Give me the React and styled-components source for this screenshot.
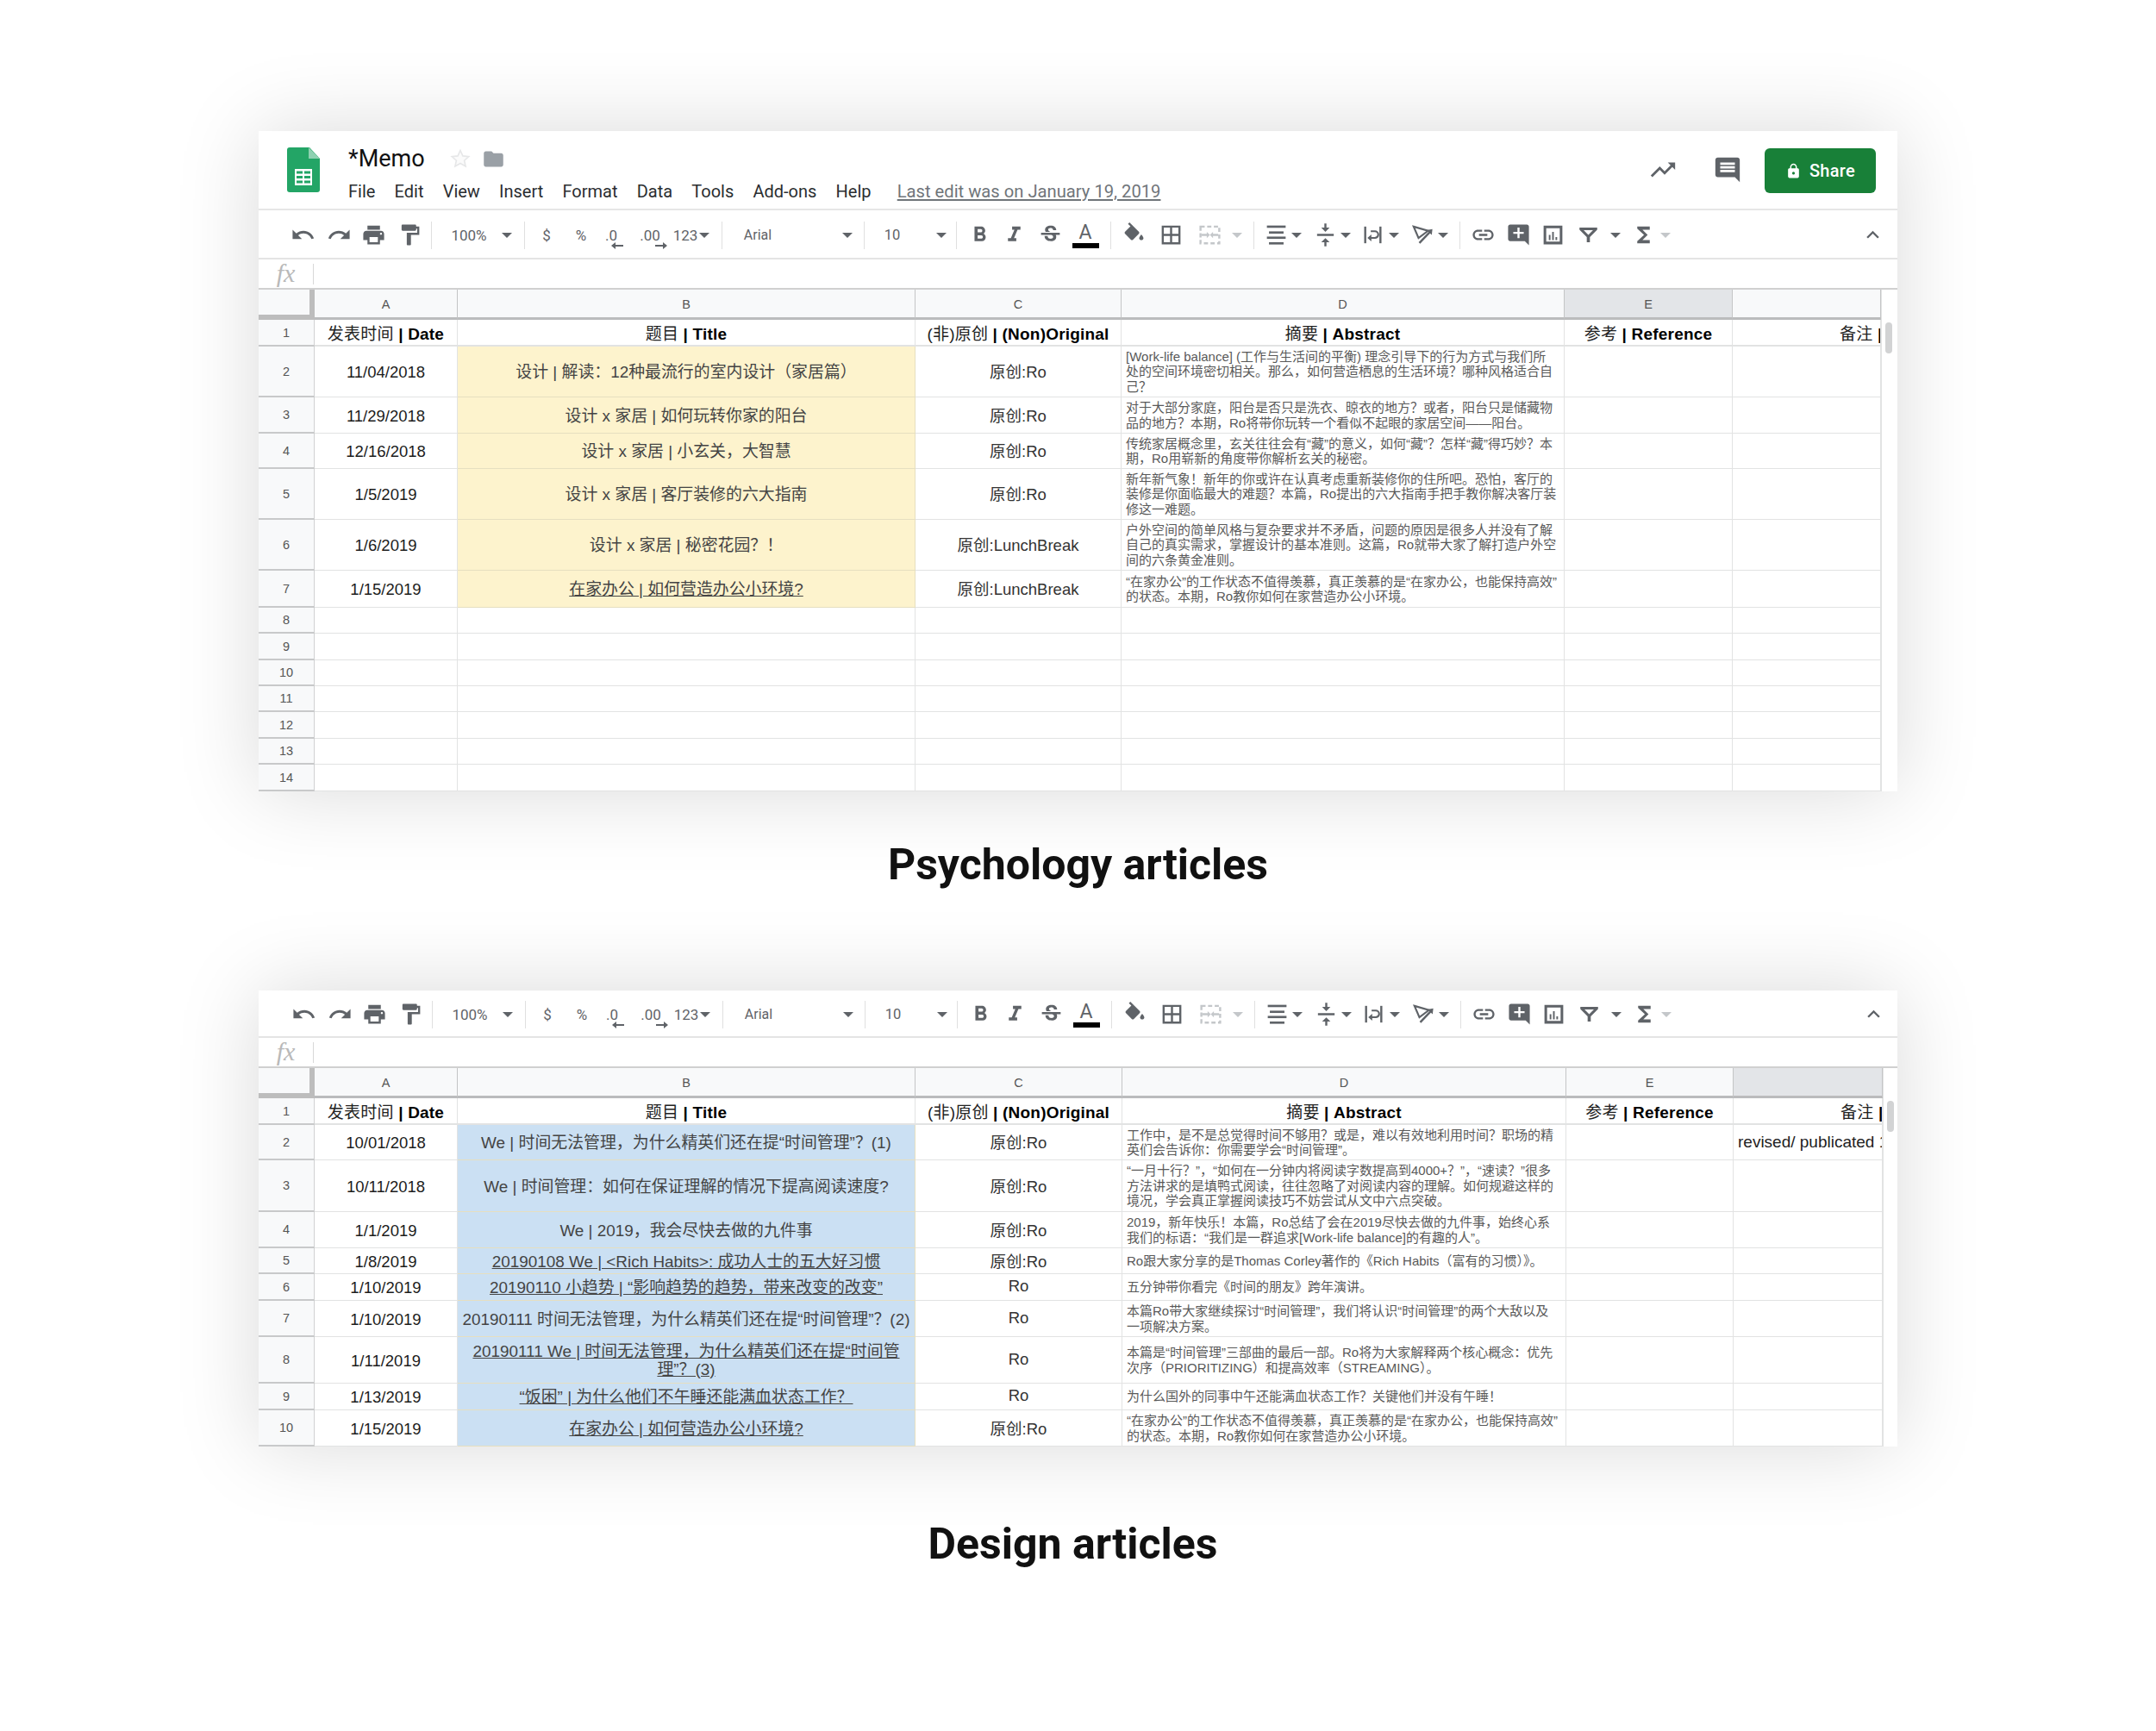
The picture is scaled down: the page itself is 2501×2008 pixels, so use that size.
import React from "react";
import styled, { createGlobalStyle, css } from "styled-components";

const Global = createGlobalStyle`
  html, body { margin: 0; padding: 0; background: #fff; }
  body { font-family: "Liberation Sans", "Noto Sans CJK SC", sans-serif; }
`;

const cellFont = `"Liberation Sans", "Noto Sans CJK SC", sans-serif`;
const uiFont = `Roboto, "Liberation Sans", sans-serif`;

const Page = styled.div`
  width: 2501px;
  height: 2008px;
  box-sizing: border-box;
  padding: 152px 300px 0;
  overflow: hidden;
`;
const Card = styled.section`
  width: 1901px;
  background: #fff;
  box-shadow: 0 0 90px rgba(0, 0, 0, 0.15);
  overflow: hidden;
`;
const Caption = styled.h2`
  margin: 0 0 ${(p) => p.$mb}px;
  height: ${(p) => p.$h}px;
  padding-right: ${(p) => p.$shift}px;
  display: flex;
  align-items: center;
  justify-content: center;
  font: 700 50px/1 ${uiFont};
  color: #111;
`;

/* ---------- title bar ---------- */
const TitleBar = styled.header`
  height: 92px;
  box-sizing: border-box;
  display: flex;
  align-items: center;
  padding: 0 25px 0 33px;
  border-bottom: 2px solid #e6e6e6;
`;
const DocInfo = styled.div`
  margin-left: 33px;
  display: flex;
  flex-direction: column;
  gap: 9px;
  flex: 1;
  padding-top: 9px;
`;
const NameRow = styled.div`
  display: flex;
  align-items: center;
  height: 32px;
`;
const DocName = styled.span`
  font: 400 27px/32px ${uiFont};
  color: #111;
  width: 118px;
`;
const MenuRow = styled.nav`
  display: flex;
  align-items: center;
  gap: 22.2px;
  font: 400 20px/26px ${uiFont};
  color: #2b2e31;
`;
const LastEdit = styled.a`
  margin-left: 8px;
  color: #70757a;
  text-decoration: underline;
  font-size: 20.2px;
`;
const FolderMark = styled.svg`
  margin-left: 13px;
  fill: #9aa0a6;
`;
const HeadAction = styled.span`
  display: flex;
  margin-right: ${(p) => p.$mr}px;
  color: #5f6368;
`;
const ShareButton = styled.button`
  width: 129px;
  height: 52px;
  margin-top: 2px;
  border: 0;
  border-radius: 6px;
  background: #188038;
  color: #fff;
  display: flex;
  align-items: center;
  justify-content: center;
  gap: 9px;
  font: 500 20px/1 ${uiFont};
  letter-spacing: 0.3px;
`;

/* ---------- toolbar ---------- */
const Toolbar = styled.div`
  height: ${(p) => p.$h}px;
  box-sizing: border-box;
  display: flex;
  align-items: center;
  padding: 2px 0 0 ${(p) => p.$shift}px;
  border-bottom: 2px solid #e4e4e4;
  color: #5f6368;
`;
const Slot = styled.span`
  flex: none;
  width: ${(p) => p.$w}px;
  margin-left: ${(p) => p.$ml}px;
  display: flex;
  flex-direction: column;
  align-items: center;
  justify-content: center;
  color: ${(p) => (p.$off ? "#c4c7ca" : "#5f6368")};
`;
const ToolText = styled.span`
  font: 400 ${(p) => p.$size || 17}px/20px ${uiFont};
  color: #5f6368;
  white-space: nowrap;
`;
const Sep = styled.span`
  flex: none;
  width: 1px;
  height: 32px;
  margin-left: ${(p) => p.$ml}px;
  background: #e0e0e0;
`;
const Arrow = styled.span`
  width: 0;
  height: 0;
  border-left: 6px solid transparent;
  border-right: 6px solid transparent;
  border-top: 6px solid ${(p) => (p.$off ? "#c4c7ca" : "#5f6368")};
`;
const ColorA = styled.span`
  font: 400 23px/21px ${uiFont};
  color: #5f6368;
  margin-top: 2px;
`;
const ColorBar = styled.span`
  width: 31px;
  height: 6px;
  background: #000;
  margin-top: 2px;
`;
const SmallArrow = styled.svg`
  width: 14px;
  height: 10px;
  margin: -3px 0 -7px ${(p) => p.$x}px;
`;

/* ---------- formula bar ---------- */
const FormulaBar = styled.div`
  height: 35px;
  box-sizing: border-box;
  display: flex;
  align-items: center;
  border-bottom: 2px solid #d0d0d0;
`;
const Fx = styled.span`
  width: 64px;
  height: 24px;
  box-sizing: border-box;
  text-align: center;
  font: italic 400 30px/22px "Liberation Serif", serif;
  color: #b9b9b9;
  border-right: 1px solid #d8d8d8;
`;

/* ---------- grid ---------- */
const Body = styled.div`
  display: flex;
`;
const Rows = styled.div`
  flex: none;
  width: ${(p) => p.$w}px;
  display: flex;
  flex-direction: column;
`;
const Track = styled.div`
  flex: 1;
  box-sizing: border-box;
  padding: 38px 0 0 4px;
  border-left: 1px solid #e2e3e3;
`;
const Thumb = styled.div`
  width: 8px;
  height: 36px;
  border-radius: 4px;
  background: #d2d3d4;
`;
const Row = styled.div`
  display: grid;
  grid-template-columns: ${(p) => p.$cols};
  height: ${(p) => p.$h}px;
`;
const cellBase = css`
  box-sizing: border-box;
  min-width: 0;
  overflow: hidden;
  display: flex;
  align-items: center;
  border-right: 1px solid #e2e3e3;
  border-bottom: 1px solid #e2e3e3;
  font-family: ${cellFont};
`;
const Corner = styled.div`
  ${cellBase};
  background: #f8f9fa;
  border-right: 6px solid #bdbdbd;
  border-bottom: 6px solid #bdbdbd;
`;
const ColHead = styled.div`
  ${cellBase};
  justify-content: center;
  background: ${(p) => (p.$active ? "#e3e5e8" : "#f8f9fa")};
  border-right: 1px solid #c4c5c6;
  border-bottom: 3px solid #bbbcbd;
  font-size: 14.5px;
  color: #555;
  padding-top: 2px;
`;
const RowHead = styled.div`
  ${cellBase};
  justify-content: center;
  background: #f8f9fa;
  border-right: 1px solid #d0d1d2;
  border-bottom: 2px solid #c8c9ca;
  font-size: 14.5px;
  color: #555;
`;
const HeadCell = styled.div`
  ${cellBase};
  justify-content: center;
  font-size: 19px;
  letter-spacing: 0.2px;
  color: #222;
  white-space: nowrap;
  border-bottom-width: 2px;
  b { color: #000; }
`;
const NotesHead = styled(HeadCell)`
  justify-content: flex-start;
  padding-left: 124px;
`;
const DateCell = styled.div`
  ${cellBase};
  justify-content: center;
  padding-top: 2px;
  font-size: 18.5px;
  color: #1c1c1c;
`;
const TitleCell = styled.div`
  ${cellBase};
  justify-content: center;
  text-align: center;
  white-space: pre-line;
  padding: 1px 2px 0;
  font-size: 18.9px;
  line-height: 21px;
  color: #444;
  background: ${(p) => p.$tint || "transparent"};
  border-color: ${(p) => (p.$tint ? "#e6dfc0" : "#e2e3e3")};
  text-decoration: ${(p) => (p.$link ? "underline" : "none")};
`;
const OriginCell = styled.div`
  ${cellBase};
  justify-content: center;
  padding-bottom: 2px;
  font-size: 18.5px;
  color: #333;
`;
const AbstractCell = styled.div`
  ${cellBase};
  padding-left: 5px;
  white-space: pre;
  font-size: 15px;
  line-height: 17.5px;
  color: #595959;
`;
const PlainCell = styled.div`
  ${cellBase};
  padding-left: 5px;
  font-size: 19px;
  color: #222;
  white-space: nowrap;
`;

/* ---------- icons ---------- */
const Icon = ({ d, size = 29, children }) => (
  <svg width={size} height={size} viewBox="0 0 24 24" fill="currentColor">
    {d && <path d={d} />}
    {children}
  </svg>
);
const P = {
  undo: "M12.5 8c-2.65 0-5.05.99-6.9 2.6L2 7v9h9l-3.62-3.62c1.39-1.16 3.16-1.88 5.12-1.88 3.54 0 6.55 2.31 7.6 5.5l2.37-.78C21.08 11.03 17.15 8 12.5 8z",
  redo: "M18.4 10.6C16.55 8.99 14.15 8 11.5 8c-4.65 0-8.58 3.03-9.96 7.22L3.9 16c1.05-3.19 4.05-5.5 7.6-5.5 1.95 0 3.73.72 5.12 1.88L13 16h9V7l-3.6 3.6z",
  print: "M19 8H5c-1.66 0-3 1.34-3 3v6h4v4h12v-4h4v-6c0-1.66-1.34-3-3-3zm-3 11H8v-5h8v5zm3-7c-.55 0-1-.45-1-1s.45-1 1-1 1 .45 1 1-.45 1-1 1zm-1-9H6v4h12V3z",
  paint: "M18 4V3c0-.55-.45-1-1-1H5c-.55 0-1 .45-1 1v4c0 .55.45 1 1 1h12c.55 0 1-.45 1-1V6h1v4H9v11c0 .55.45 1 1 1h2c.55 0 1-.45 1-1v-9h8V4h-3z",
  bold: "M15.6 10.79c.97-.67 1.65-1.77 1.65-2.79 0-2.26-1.75-4-4-4H7v14h7.04c2.09 0 3.71-1.7 3.71-3.79 0-1.52-.86-2.82-2.15-3.42zM10 6.5h3c.83 0 1.5.67 1.5 1.5s-.67 1.5-1.5 1.5h-3v-3zm3.5 9H10v-3h3.5c.83 0 1.5.67 1.5 1.5s-.67 1.5-1.5 1.5z",
  italic: "M10 4v3h2.21l-3.42 8H6v3h8v-3h-2.21l3.42-8H18V4z",
  strike: "M7.24 8.75c-.26-.48-.39-1.03-.39-1.67 0-.61.13-1.16.4-1.67.26-.5.63-.93 1.11-1.29.48-.35 1.05-.63 1.7-.83.66-.19 1.39-.29 2.18-.29.81 0 1.54.11 2.21.34.66.22 1.23.54 1.69.94.47.4.83.88 1.08 1.43.25.55.38 1.15.38 1.81h-3.01c0-.31-.05-.59-.15-.85-.09-.27-.24-.49-.44-.68-.2-.19-.45-.33-.75-.44-.3-.1-.66-.16-1.06-.16-.39 0-.74.04-1.03.13-.29.09-.53.21-.72.36-.19.16-.34.34-.44.55-.1.21-.15.43-.15.66 0 .48.25.88.74 1.21.38.25.77.48 1.41.7H7.39c-.05-.08-.11-.17-.15-.25zM21 12v-2H3v2h9.62c.18.07.4.14.55.2.37.17.66.34.87.51.21.17.35.36.43.57.07.2.11.43.11.69 0 .23-.05.45-.14.66-.09.2-.23.38-.42.53-.19.15-.42.26-.71.35-.29.08-.63.13-1.01.13-.43 0-.83-.04-1.18-.13s-.66-.23-.91-.42c-.25-.19-.45-.44-.59-.75-.14-.31-.25-.76-.25-1.21H6.4c0 .55.08 1.13.24 1.58.16.45.37.85.65 1.21.28.35.6.66.98.92.37.26.78.48 1.22.65.44.17.9.3 1.38.39.48.08.96.13 1.44.13.8 0 1.53-.09 2.18-.28s1.21-.45 1.67-.79c.46-.34.82-.77 1.07-1.27s.38-1.07.38-1.71c0-.6-.1-1.14-.31-1.61-.05-.11-.11-.23-.17-.33H21z",
  borders: "M3 3v18h18V3H3zm8 16H5v-6h6v6zm0-8H5V5h6v6zm8 8h-6v-6h6v6zm0-8h-6V5h6v6z",
  valign: "M8 19h3v4h2v-4h3l-4-4-4 4zm8-14h-3V1h-2v4H8l4 4 4-4zM4 11v2h16v-2H4z",
  link: "M3.9 12c0-1.71 1.39-3.1 3.1-3.1h4V7H7c-2.76 0-5 2.24-5 5s2.24 5 5 5h4v-1.9H7c-1.71 0-3.1-1.39-3.1-3.1zM8 13h8v-2H8v2zm9-6h-4v1.9h4c1.71 0 3.1 1.39 3.1 3.1s-1.39 3.1-3.1 3.1h-4V17h4c2.76 0 5-2.24 5-5s-2.24-5-5-5z",
  addComment: "M21.99 4c0-1.1-.89-2-1.99-2H4c-1.1 0-2 .9-2 2v12c0 1.1.9 2 2 2h14l4 4-.01-18zM17 11h-4v4h-2v-4H7V9h4V5h2v4h4v2z",
  sigma: "M18 4H6v2l6.5 6L6 18v2h12v-3h-7l5-5-5-5h7z",
  comment: "M21.99 4c0-1.1-.89-2-1.99-2H4c-1.1 0-2 .9-2 2v12c0 1.1.9 2 2 2h14l4 4-.01-18zM18 14H6v-2h12v2zm0-3H6V9h12v2zm0-3H6V6h12v2z",
  trend: "M16 6l2.29 2.29-4.88 4.88-4-4L2 16.59 3.41 18l6-6 4 4 6.3-6.29L22 12V6z",
  lock: "M18 8h-1V6c0-2.76-2.24-5-5-5S7 3.24 7 6v2H6c-1.1 0-2 .9-2 2v10c0 1.1.9 2 2 2h12c1.1 0 2-.9 2-2V10c0-1.1-.9-2-2-2zm-6 9c-1.1 0-2-.9-2-2s.9-2 2-2 2 .9 2 2-.9 2-2 2zm3.1-9H8.9V6c0-1.71 1.39-3.1 3.1-3.1 1.71 0 3.1 1.39 3.1 3.1v2z",
  folder: "M10 4H4c-1.1 0-1.99.9-1.99 2L2 18c0 1.1.9 2 2 2h16c1.1 0 2-.9 2-2V8c0-1.1-.9-2-2-2h-8l-2-2z",
  less: "M12 8l-6 6 1.41 1.41L12 10.83l4.59 4.58L18 14z",
};
const Fill = () => (
  <Icon>
    <path d="M16.56 8.94L7.62 0 6.21 1.41l2.38 2.38-5.15 5.15c-.59.59-.59 1.54 0 2.12l5.5 5.5c.29.29.68.44 1.06.44s.77-.15 1.06-.44l5.5-5.5c.59-.58.59-1.53 0-2.12z" />
    <path d="M19 11.5s-2 2.17-2 3.5c0 1.1.9 2 2 2s2-.9 2-2c0-1.33-2-3.5-2-3.5z" />
  </Icon>
);
const Merge = () => (
  <Icon>
    <rect x="3" y="4" width="18" height="16" fill="none" stroke="currentColor" strokeWidth="2" strokeDasharray="4 2.4" />
    <path d="M4 11h5V9l3 3-3 3v-2H4zM20 11h-5V9l-3 3 3 3v-2h5z" />
  </Icon>
);
const Align = () => (
  <Icon>
    <rect x="3" y="3" width="18" height="2.2" />
    <rect x="5" y="8.6" width="14" height="2.2" />
    <rect x="3" y="13.6" width="18" height="2.2" />
    <rect x="5" y="19" width="14" height="2.2" />
  </Icon>
);
const Wrap = () => (
  <Icon>
    <rect x="3.7" y="4" width="2" height="16" />
    <rect x="18.3" y="4" width="2" height="16" />
    <path d="M10 8.5h4a3.2 3.2 0 0 1 0 6.4h-4" fill="none" stroke="currentColor" strokeWidth="1.8" />
    <path d="M10.6 11.6L6.8 14.9l3.8 3.3z" />
  </Icon>
);
const Rotate = () => (
  <Icon>
    <path d="M3.2 4L17 8.1 7.9 15z" fill="none" stroke="currentColor" strokeWidth="1.8" />
    <path d="M8.7 19.7L19 9" fill="none" stroke="currentColor" strokeWidth="2" />
    <path d="M21.2 6.5l-.6 5.6-5-4.6z" />
  </Icon>
);
const Filter = () => (
  <Icon>
    <path fillRule="evenodd" d="M3.5 5h17v2l-7 7v5h-3v-5l-7-7zM7.5 7.5h9l-4.5 4.5z" />
  </Icon>
);
const Chart = () => (
  <Icon>
    <path fillRule="evenodd" d="M3 3h18v18H3zM5.5 5.5v13h13v-13z" />
    <path d="M8 12h1.6v5H8zm3.2-3h1.6v8h-1.6zm3.2 5H16v3h-1.6z" />
  </Icon>
);
const Star = () => (
  <svg width="24" height="24" viewBox="0 0 24 24" fill="#fbfbfb" stroke="#e6e7e8" strokeWidth="1.6">
    <path d="M12 2.5l2.9 6.4 6.9.7-5.2 4.6 1.5 6.8-6.1-3.5-6.1 3.5 1.5-6.8-5.2-4.6 6.9-.7z" />
  </svg>
);
const SheetsLogo = () => (
  <svg width="38" height="52" viewBox="0 0 38 52">
    <path d="M3 0h23l12 13v36a3 3 0 0 1-3 3H3a3 3 0 0 1-3-3V3a3 3 0 0 1 3-3z" fill="#23a566" />
    <path d="M25 0l13 13H25z" fill="#8ed1b1" />
    <rect x="9" y="25" width="20" height="19" fill="#fff" />
    <path d="M11 29h7M20 29h7M11 34.5h7M20 34.5h7M11 40h7M20 40h7" stroke="#23a566" strokeWidth="3" />
  </svg>
);
const LeftArrow = () => (
  <SmallArrow $x={14} viewBox="0 0 14 10" fill="currentColor">
    <path d="M0 5l5-4v3h9v2H5v3z" />
  </SmallArrow>
);
const RightArrow = () => (
  <SmallArrow $x={26} viewBox="0 0 14 10" fill="currentColor">
    <path d="M14 5L9 1v3H0v2h9v3z" />
  </SmallArrow>
);

/* tool list: each tool has its page centre, its width and what it draws */
const ico = (at, d, w = 29) => ({ at, w, node: <Icon d={d} /> });
const drawn = (at, node, w = 29, off) => ({ at, w, node, off });
const txt = (at, w, s, size) => ({ at, w, node: <ToolText $size={size}>{s}</ToolText> });
const arr = (at, off) => ({ at, w: 12, off, node: <Arrow $off={off} /> });
const sep = (at) => ({ at, w: 1, sep: true });

const tools = [
  ico(351, P.undo), ico(393, P.redo), ico(433, P.print), ico(475, P.paint), sep(500),
  txt(544, 44, "100%"), arr(588), sep(608),
  txt(634, 14, "$"), txt(674, 18, "%"),
  drawn(709, <><ToolText>.0</ToolText><LeftArrow /></>, 28),
  drawn(754, <><ToolText>.00</ToolText><RightArrow /></>, 28),
  txt(795, 30, "123"), arr(817), sep(837),
  txt(879, 40, "Arial", 16), arr(983), sep(1002),
  txt(1035, 24, "10", 16.5), arr(1092), sep(1109),
  ico(1136, P.bold), ico(1176, P.italic), ico(1218, P.strike),
  drawn(1259, <><ColorA>A</ColorA><ColorBar /></>, 31), sep(1288),
  drawn(1315, <Fill />), ico(1358, P.borders),
  drawn(1403, <Merge />, 29, true), arr(1435, true), sep(1454),
  drawn(1480, <Align />), arr(1504), ico(1537, P.valign), arr(1561),
  drawn(1592, <Wrap />), arr(1617), drawn(1650, <Rotate />), arr(1674), sep(1693),
  ico(1720, P.link), ico(1761, P.addComment), drawn(1801, <Chart />),
  drawn(1842, <Filter />), arr(1874), ico(1906, P.sigma), arr(1932, true),
  ico(2172, P.less),
];

const Tools = ({ h, shift }) => {
  let right = 300;
  return (
    <Toolbar $h={h} $shift={shift}>
      {tools.map((t, i) => {
        const left = t.at - t.w / 2;
        const ml = left - right;
        right = left + t.w;
        return t.sep ? (
          <Sep key={i} $ml={ml} />
        ) : (
          <Slot key={i} $w={t.w} $ml={ml} $off={t.off}>
            {t.node}
          </Slot>
        );
      })}
    </Toolbar>
  );
};

/* ---------- data ---------- */
const Head = ({ cjk, latin }) => (
  <span>
    {cjk} <b>| {latin}</b>
  </span>
);
const homeOffice = "“在家办公”的工作状态不值得羡慕，真正羡慕的是“在家办公，也能保持高效”\n的状态。本期，Ro教你如何在家营造办公小环境。";
const psychology = [
  [59, "11/04/2018", "设计 | 解读：12种最流行的室内设计（家居篇）", false, "原创:Ro", "[Work-life balance] (工作与生活间的平衡) 理念引导下的行为方式与我们所\n处的空间环境密切相关。那么，如何营造栖息的生活环境？哪种风格适合自\n己？"],
  [42, "11/29/2018", "设计 x 家居 | 如何玩转你家的阳台", false, "原创:Ro", "对于大部分家庭，阳台是否只是洗衣、晾衣的地方？或者，阳台只是储藏物\n品的地方？本期，Ro将带你玩转一个看似不起眼的家居空间——阳台。"],
  [41, "12/16/2018", "设计 x 家居 | 小玄关，大智慧", false, "原创:Ro", "传统家居概念里，玄关往往会有“藏”的意义，如何“藏”？怎样“藏”得巧妙？本\n期，Ro用崭新的角度带你解析玄关的秘密。"],
  [59, "1/5/2019", "设计 x 家居 | 客厅装修的六大指南", false, "原创:Ro", "新年新气象！新年的你或许在认真考虑重新装修你的住所吧。恐怕，客厅的\n装修是你面临最大的难题？本篇，Ro提出的六大指南手把手教你解决客厅装\n修这一难题。"],
  [59, "1/6/2019", "设计 x 家居 | 秘密花园？！", false, "原创:LunchBreak", "户外空间的简单风格与复杂要求并不矛盾，问题的原因是很多人并没有了解\n自己的真实需求，掌握设计的基本准则。这篇，Ro就带大家了解打造户外空\n间的六条黄金准则。"],
  [43, "1/15/2019", "在家办公 | 如何营造办公小环境?", true, "原创:LunchBreak", homeOffice],
  [30], [31], [30], [30], [31], [30], [31],
];
const design = [
  [41, "10/01/2018", "We | 时间无法管理，为什么精英们还在提“时间管理”？(1)", false, "原创:Ro", "工作中，是不是总觉得时间不够用？或是，难以有效地利用时间？职场的精\n英们会告诉你：你需要学会“时间管理”。", "revised/ publicated 1"],
  [60, "10/11/2018", "We | 时间管理：如何在保证理解的情况下提高阅读速度?", false, "原创:Ro", "“一月十行？”，“如何在一分钟内将阅读字数提高到4000+？”，“速读？”很多\n方法讲求的是填鸭式阅读，往往忽略了对阅读内容的理解。如何规避这样的\n境况，学会真正掌握阅读技巧不妨尝试从文中六点突破。"],
  [42, "1/1/2019", "We | 2019，我会尽快去做的九件事", false, "原创:Ro", "2019，新年快乐！本篇，Ro总结了会在2019尽快去做的九件事，始终心系\n我们的标语：“我们是一群追求[Work-life balance]的有趣的人”。"],
  [30, "1/8/2019", "20190108 We | <Rich Habits>: 成功人士的五大好习惯", true, "原创:Ro", "Ro跟大家分享的是Thomas Corley著作的《Rich Habits（富有的习惯）》。"],
  [31, "1/10/2019", "20190110 小趋势 | “影响趋势的趋势，带来改变的改变”", true, "Ro", "五分钟带你看完《时间的朋友》跨年演讲。"],
  [42, "1/10/2019", "20190111 时间无法管理，为什么精英们还在提“时间管理”？(2)", false, "Ro", "本篇Ro带大家继续探讨“时间管理”，我们将认识“时间管理”的两个大敌以及\n一项解决方案。"],
  [54, "1/11/2019", "20190111 We | 时间无法管理，为什么精英们还在提“时间管\n理”？(3)", true, "Ro", "本篇是“时间管理”三部曲的最后一部。Ro将为大家解释两个核心概念：优先\n次序（PRIORITIZING）和提高效率（STREAMING）。"],
  [31, "1/13/2019", "“饭困” | 为什么他们不午睡还能满血状态工作？", true, "Ro", "为什么国外的同事中午还能满血状态工作？关键他们并没有午睡！"],
  [42, "1/15/2019", "在家办公 | 如何营造办公小环境?", true, "原创:Ro", homeOffice],
];

const Sheet = ({ cols, width, rows, tint, activeCol }) => (
  <Body>
    <Rows $w={width}>
      <Row $cols={cols} $h={35}>
        <Corner />
        {["A", "B", "C", "D", "E", ""].map((c, i) => (
          <ColHead key={i} $active={activeCol === i}>{c}</ColHead>
        ))}
      </Row>
      <Row $cols={cols} $h={31}>
        <RowHead>1</RowHead>
        <HeadCell><Head cjk="发表时间" latin="Date" /></HeadCell>
        <HeadCell><Head cjk="题目" latin="Title" /></HeadCell>
        <HeadCell><Head cjk="(非)原创" latin="(Non)Original" /></HeadCell>
        <HeadCell><Head cjk="摘要" latin="Abstract" /></HeadCell>
        <HeadCell><Head cjk="参考" latin="Reference" /></HeadCell>
        <NotesHead><span>备注 <b>|</b></span></NotesHead>
      </Row>
      {rows.map(([h, date, title, link, origin, abstract, note], i) => (
        <Row key={i} $cols={cols} $h={h}>
          <RowHead>{i + 2}</RowHead>
          <DateCell>{date}</DateCell>
          <TitleCell $tint={title ? tint : undefined} $link={link}>
            <span>{title}</span>
          </TitleCell>
          <OriginCell>{origin}</OriginCell>
          <AbstractCell><span>{abstract}</span></AbstractCell>
          <PlainCell />
          <PlainCell>{note}</PlainCell>
        </Row>
      ))}
    </Rows>
    <Track><Thumb /></Track>
  </Body>
);

export default function App() {
  return (
    <Page>
      <Global />
      <Card>
        <TitleBar>
          <SheetsLogo />
          <DocInfo>
            <NameRow>
              <DocName>*Memo</DocName>
              <Star />
              <FolderMark width="27" height="27" viewBox="0 0 24 24">
                <path d={P.folder} />
              </FolderMark>
            </NameRow>
            <MenuRow>
              {["File", "Edit", "View", "Insert", "Format", "Data", "Tools", "Add-ons", "Help"].map((m) => (
                <span key={m}>{m}</span>
              ))}
              <LastEdit>Last edit was on January 19, 2019</LastEdit>
            </MenuRow>
          </DocInfo>
          <HeadAction $mr={41}><Icon d={P.trend} size={34} /></HeadAction>
          <HeadAction $mr={26}><Icon d={P.comment} size={34} /></HeadAction>
          <ShareButton>
            <Icon d={P.lock} size={19} />
            Share
          </ShareButton>
        </TitleBar>
        <Tools h={57} shift={0} />
        <FormulaBar><Fx>fx</Fx></FormulaBar>
        <Sheet
          cols="65px 166px 531px 239px 514px 195px 172px"
          width={1882}
          rows={psychology}
          tint="#fdf3cd"
          activeCol={4}
        />
      </Card>
      <Caption $h={170} $mb={61} $shift={0}>Psychology articles</Caption>
      <Card>
        <Tools h={55} shift={1} />
        <FormulaBar><Fx>fx</Fx></FormulaBar>
        <Sheet
          cols="65px 166px 531px 240px 515px 194px 173px"
          width={1884}
          rows={design}
          tint="#cbe0f3"
          activeCol={5}
        />
      </Card>
      <Caption $h={226} $mb={0} $shift={12}>Design articles</Caption>
    </Page>
  );
}
